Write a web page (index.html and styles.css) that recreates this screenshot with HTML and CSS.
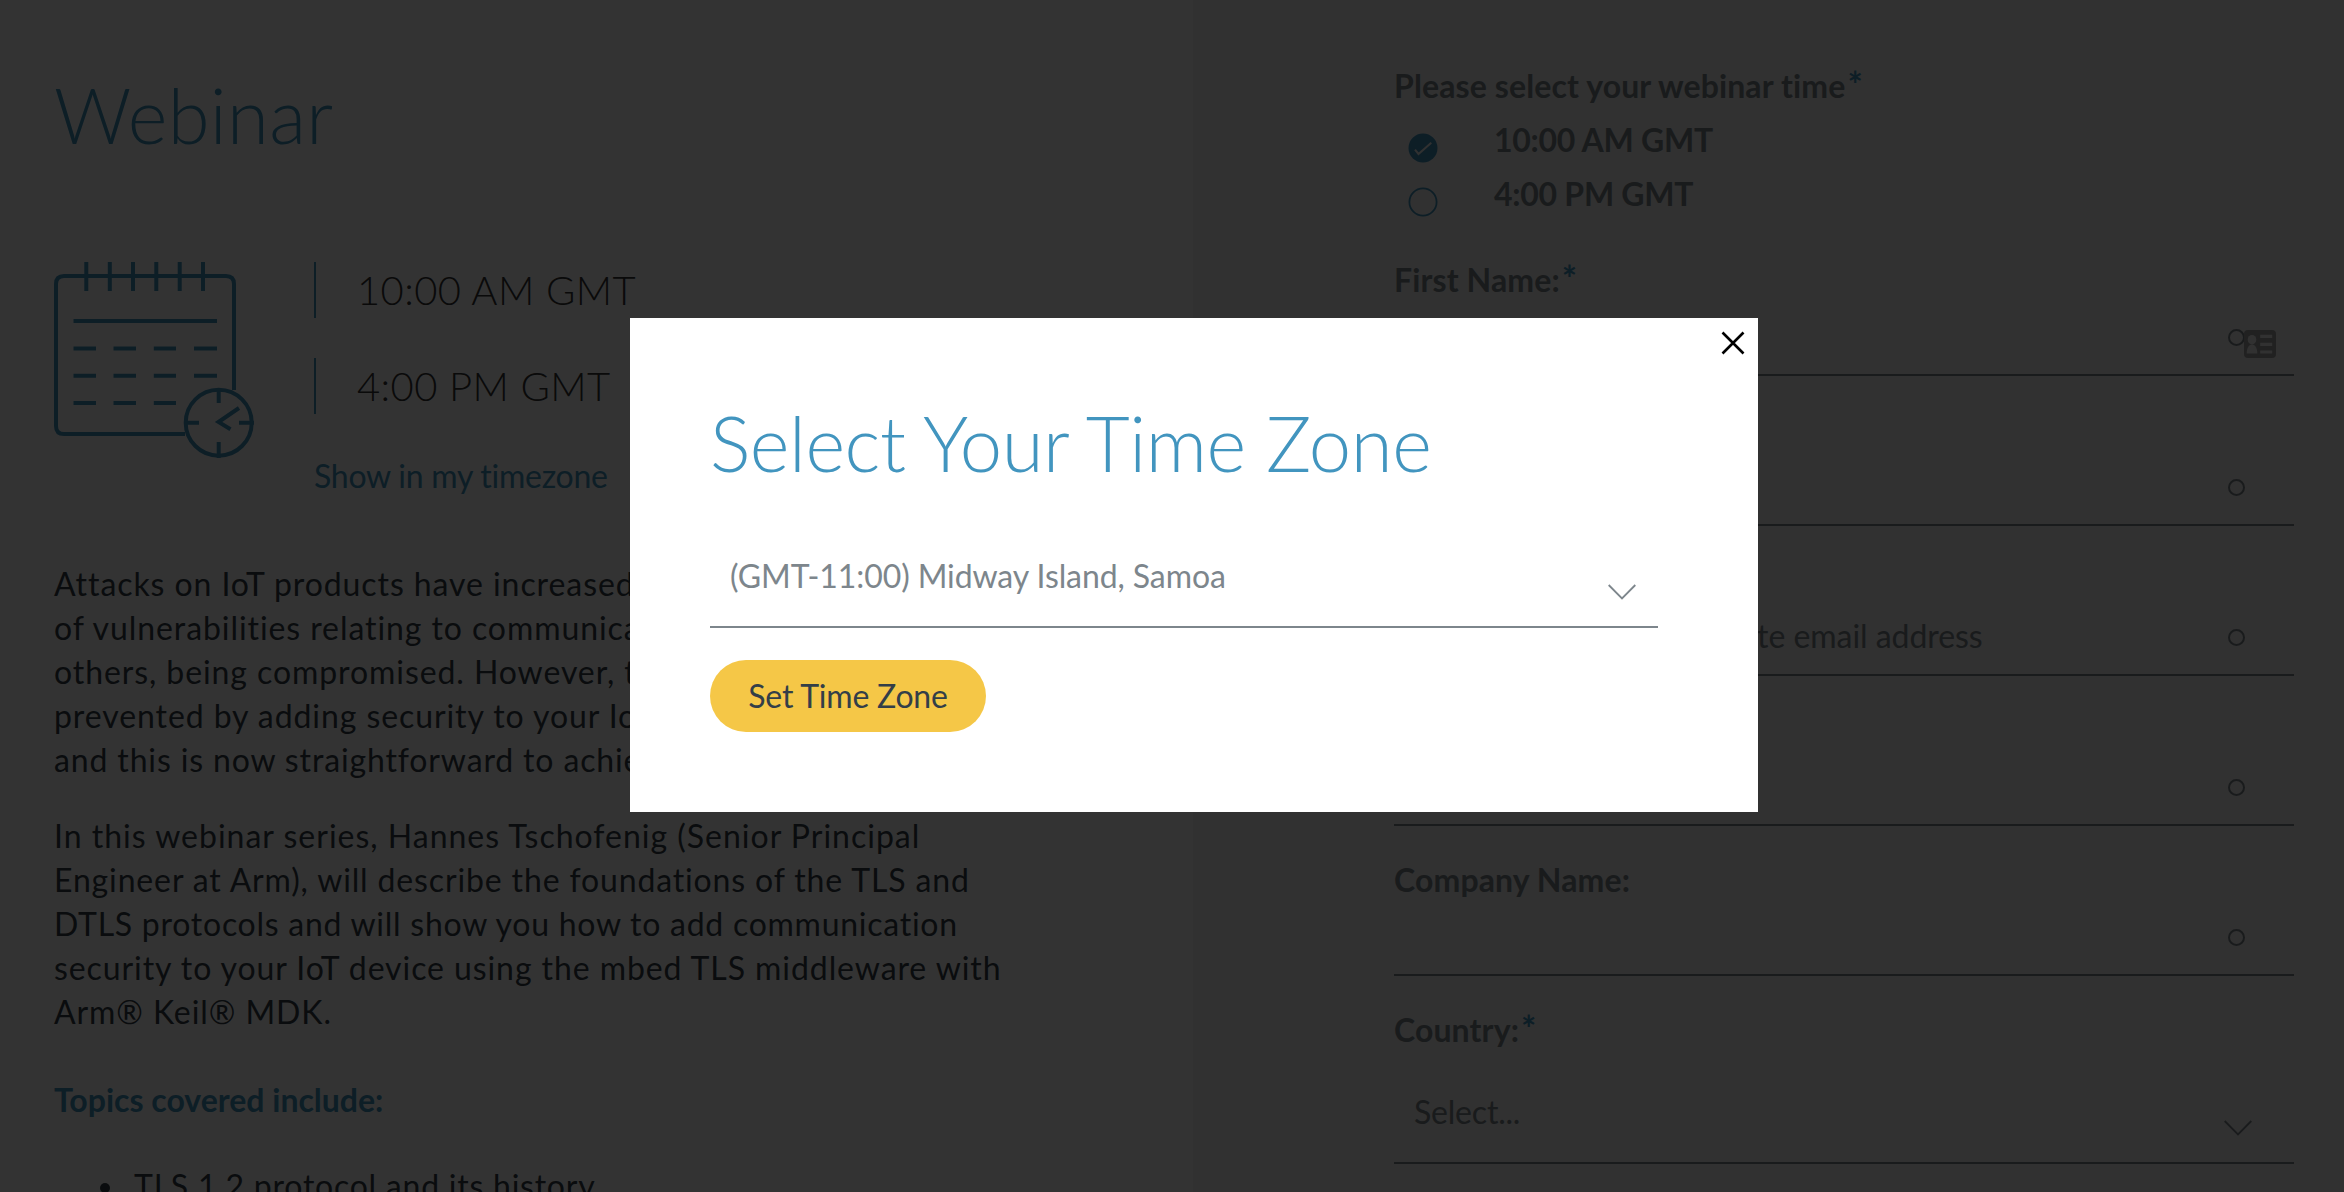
FILE: index.html
```
<!DOCTYPE html>
<html lang="en">
<head>
<meta charset="utf-8">
<title>Webinar</title>
<link rel="stylesheet" href="styles.css">
</head>
<body>
<div class="page">
  <main class="info">
    <h1 class="title">Webinar</h1>
    <section class="schedule">
      <svg class="calendar" width="204" height="200" viewBox="0 0 204 200" fill="none" stroke="currentColor" stroke-width="4">
        <path d="M131 172H10Q2 172 2 164V22Q2 14 10 14H172Q180 14 180 22V128"/>
        <path d="M32.3 0V29M55.8 0V29M79 0V29M102.3 0V29M125.7 0V29M149 0V29"/>
        <path d="M19.5 59H163"/>
        <path d="M19.5 86.5H42M59.5 86.5H82M99.8 86.5H122M140 86.5H163M19.5 113.8H42M59.5 113.8H82M99.8 113.8H122M140 113.8H163M19.5 141H42M59.5 141H82M99.8 141H122"/>
        <circle cx="164.7" cy="160.7" r="33"/>
        <path d="M164.7 126V141M164.7 180V196M130 160.7H145M185 160.7H200"/>
        <path d="M185 146L164.5 160L176.5 167.3"/>
      </svg>
      <div class="times">
        <div class="time">10:00 AM GMT</div>
        <div class="time">4:00 PM GMT</div>
        <a class="tz-link">Show in my timezone</a>
      </div>
    </section>
    <p class="copy">Attacks on IoT products have increased, with a range<br>of vulnerabilities relating to communication, and many<br>others, being compromised. However, these can be<br>prevented by adding security to your IoT products,<br><span class="snug">and this is now straightforward to achieve.</span></p>
    <p class="copy"><span class="loose">In this webinar series, Hannes Tschofenig (Senior Principal</span><br><span class="snug">Engineer at Arm), will describe the foundations of the TLS and</span><br><span class="tight">DTLS protocols and will show you how to add communication</span><br>security to your IoT device using the mbed TLS middleware with<br>Arm® Keil® MDK.</p>
    <h2 class="subtitle">Topics covered include:</h2>
    <ul class="topics">
      <li>TLS 1.2 protocol and its history</li>
    </ul>
  </main>
  <form class="signup">
    <div class="label">Please select your webinar time<span class="req">*</span></div>
    <div class="options">
      <div class="option">
        <svg class="radio" width="30" height="30" viewBox="0 0 30 30"><circle cx="15" cy="15" r="14.5" fill="currentColor"/><path d="M7 16.7L10.5 21L23.3 9.7" fill="none" stroke="#f4f4f4" stroke-width="2"/></svg>
        <span>10:00 AM GMT</span>
      </div>
      <div class="option">
        <svg class="radio" width="30" height="30" viewBox="0 0 30 30"><circle cx="15" cy="15" r="13.6" fill="none" stroke="currentColor" stroke-width="1.8"/></svg>
        <span>4:00 PM GMT</span>
      </div>
    </div>
    <div class="field">
      <div class="label">First Name:<span class="req">*</span></div>
      <div class="input"><i class="dot"></i>
        <svg class="card" width="32" height="28" viewBox="0 0 32 28"><rect width="32" height="28" rx="4" fill="#a3a3a3"/><g fill="#f4f4f4"><ellipse cx="8" cy="9.7" rx="4.3" ry="4.8"/><path d="M2.7 23.6C2.7 17.5 5.2 14.6 8 14.6S13.3 17.5 13.3 23.6Z"/><path d="M16.2 4.8H28.2V8H16.2ZM16.2 12.7H28.2V15.9H16.2ZM16.2 20.4H28.2V23.6H16.2Z"/></g></svg>
      </div>
    </div>
    <div class="field">
      <div class="label"></div>
      <div class="input"><i class="dot"></i></div>
    </div>
    <div class="field">
      <div class="label"></div>
      <div class="input"><span class="placeholder">Please provide a corporate email address</span><i class="dot"></i></div>
    </div>
    <div class="field">
      <div class="label"></div>
      <div class="input"><i class="dot"></i></div>
    </div>
    <div class="field">
      <div class="label">Company Name:</div>
      <div class="input"><i class="dot"></i></div>
    </div>
    <div class="field">
      <div class="label">Country:<span class="req">*</span></div>
      <div class="select"><span class="ellipsis">Select...</span>
        <svg class="chevron" width="28" height="16" viewBox="0 0 28 16" fill="none" stroke="currentColor" stroke-width="1.8"><path d="M.7 1L14 14.4L27.3 1"/></svg>
      </div>
    </div>
  </form>
</div>
<div class="overlay">
  <div class="modal" role="dialog">
    <svg class="close" width="24" height="24" viewBox="0 0 24 24" stroke="#000" stroke-width="2.6"><path d="M1.5 1.5L22.5 22.5M22.5 1.5L1.5 22.5"/></svg>
    <h2 class="modal-title">Select Your Time Zone</h2>
    <div class="select zone"><span>(GMT-11:00) Midway Island, Samoa</span>
      <svg class="chevron" width="28" height="16" viewBox="0 0 28 16" fill="none" stroke="currentColor" stroke-width="1.8"><path d="M.7 1L14 14.4L27.3 1"/></svg>
    </div>
    <button class="button" type="button">Set Time Zone</button>
  </div>
</div>
</body>
</html>
```
FILE: styles.css
```
* { box-sizing: border-box; }
html, body { margin: 0; height: 1192px; overflow: hidden; }
body {
  font-family: Lato, "Liberation Sans", sans-serif;
  font-size: 32px;
  line-height: 44px;
  font-variant-ligatures: none;
  color: #333e48;
  background: #fff;
}
h1, h2, p, ul { margin: 0; }

.page { display: flex; height: 1192px; overflow: hidden; }
.info { width: 1193px; flex: none; padding: 69px 0 0 54px; }
.signup { flex: 1; padding: 64px 50px 0 201px; background: #f4f4f4; color: #7d868c; }

.title, .modal-title {
  font-size: 76px;
  line-height: 92px;
  font-weight: 300;
  color: #4295bf;
}
.title { letter-spacing: .3px; }
.modal-title { letter-spacing: -.43px; }

.schedule { display: flex; gap: 56px; margin-top: 101px; height: 236px; }
.calendar { flex: none; color: #4295bf; }
.times { display: flex; flex-direction: column; gap: 40px; }
.time {
  border-left: 2px solid #4295bf;
  padding-left: 41px;
  font-size: 40px;
  line-height: 56px;
  font-weight: 300;
  letter-spacing: .4px;
  color: #333;
}
.tz-link { color: #4295bf; letter-spacing: -.25px; }

.copy { margin-top: 64px; letter-spacing: .92px; }
.copy + .copy { margin-top: 32px; }
.loose { letter-spacing: 1px; }
.snug { letter-spacing: .86px; }
.tight { letter-spacing: .74px; }
.subtitle { margin-top: 44px; font-size: 32px; font-weight: 700; color: #4295bf; }
.topics { margin-top: 42px; padding: 0 0 0 46px; list-style: none; letter-spacing: .76px; }
.topics li { display: flex; }
.topics li::before {
  content: "";
  width: 10px;
  height: 10px;
  margin: 19px 24px 0 0;
  border-radius: 50%;
  background: #333e48;
}

.label { height: 44px; font-weight: 700; letter-spacing: .12px; }
.req { color: #4295bf; margin-left: 2px; font-size: 36px; line-height: 0; }
.options { margin: 4px 0 38px; }
.option {
  display: flex;
  gap: 56px;
  height: 54px;
  padding-left: 14px;
  line-height: 56px;
  font-weight: 700;
  letter-spacing: -.27px;
}
.radio { flex: none; margin-top: 21px; color: #4295bf; }

.field { margin-bottom: 32px; }
.input {
  display: flex;
  height: 74px;
  padding: 0 18px 0 20px;
  border-bottom: 2px solid #7d868c;
  line-height: 68px;
}
.placeholder { letter-spacing: -.05px; }
.dot {
  width: 17px;
  height: 17px;
  margin: 27px 31px 0 auto;
  border: 2px solid #7d868c;
  border-radius: 50%;
  flex: none;
}
.dot:has(+ .card) { margin-right: -1px; }
.card { margin-top: 28px; flex: none; }
.select {
  display: flex;
  justify-content: space-between;
  height: 112px;
  padding: 38px 42px 0 20px;
  border-bottom: 2px solid #7d868c;
}
.ellipsis { letter-spacing: -.2px; }
.chevron { margin-top: 30px; flex: none; }

.overlay { position: fixed; inset: 0; background: rgba(0, 0, 0, .8); }
.modal {
  position: absolute;
  left: 630px;
  top: 318px;
  width: 1128px;
  height: 494px;
  padding: 79px 100px 0 80px;
  background: #fff;
}
.close { position: absolute; top: 13px; right: 13px; }
.zone {
  height: 107px;
  margin-top: 32px;
  padding: 33px 22px 0 20px;
  color: #7d868c;
  letter-spacing: -.09px;
}
.button {
  display: block;
  height: 72px;
  width: 276px;
  margin-top: 32px;
  padding: 0;
  border: 0;
  border-radius: 36px;
  background: #f5c747;
  color: #333e48;
  font: 400 32px/72px Lato, "Liberation Sans", sans-serif;
  font-variant-ligatures: none;
  letter-spacing: -.2px;
}
```
